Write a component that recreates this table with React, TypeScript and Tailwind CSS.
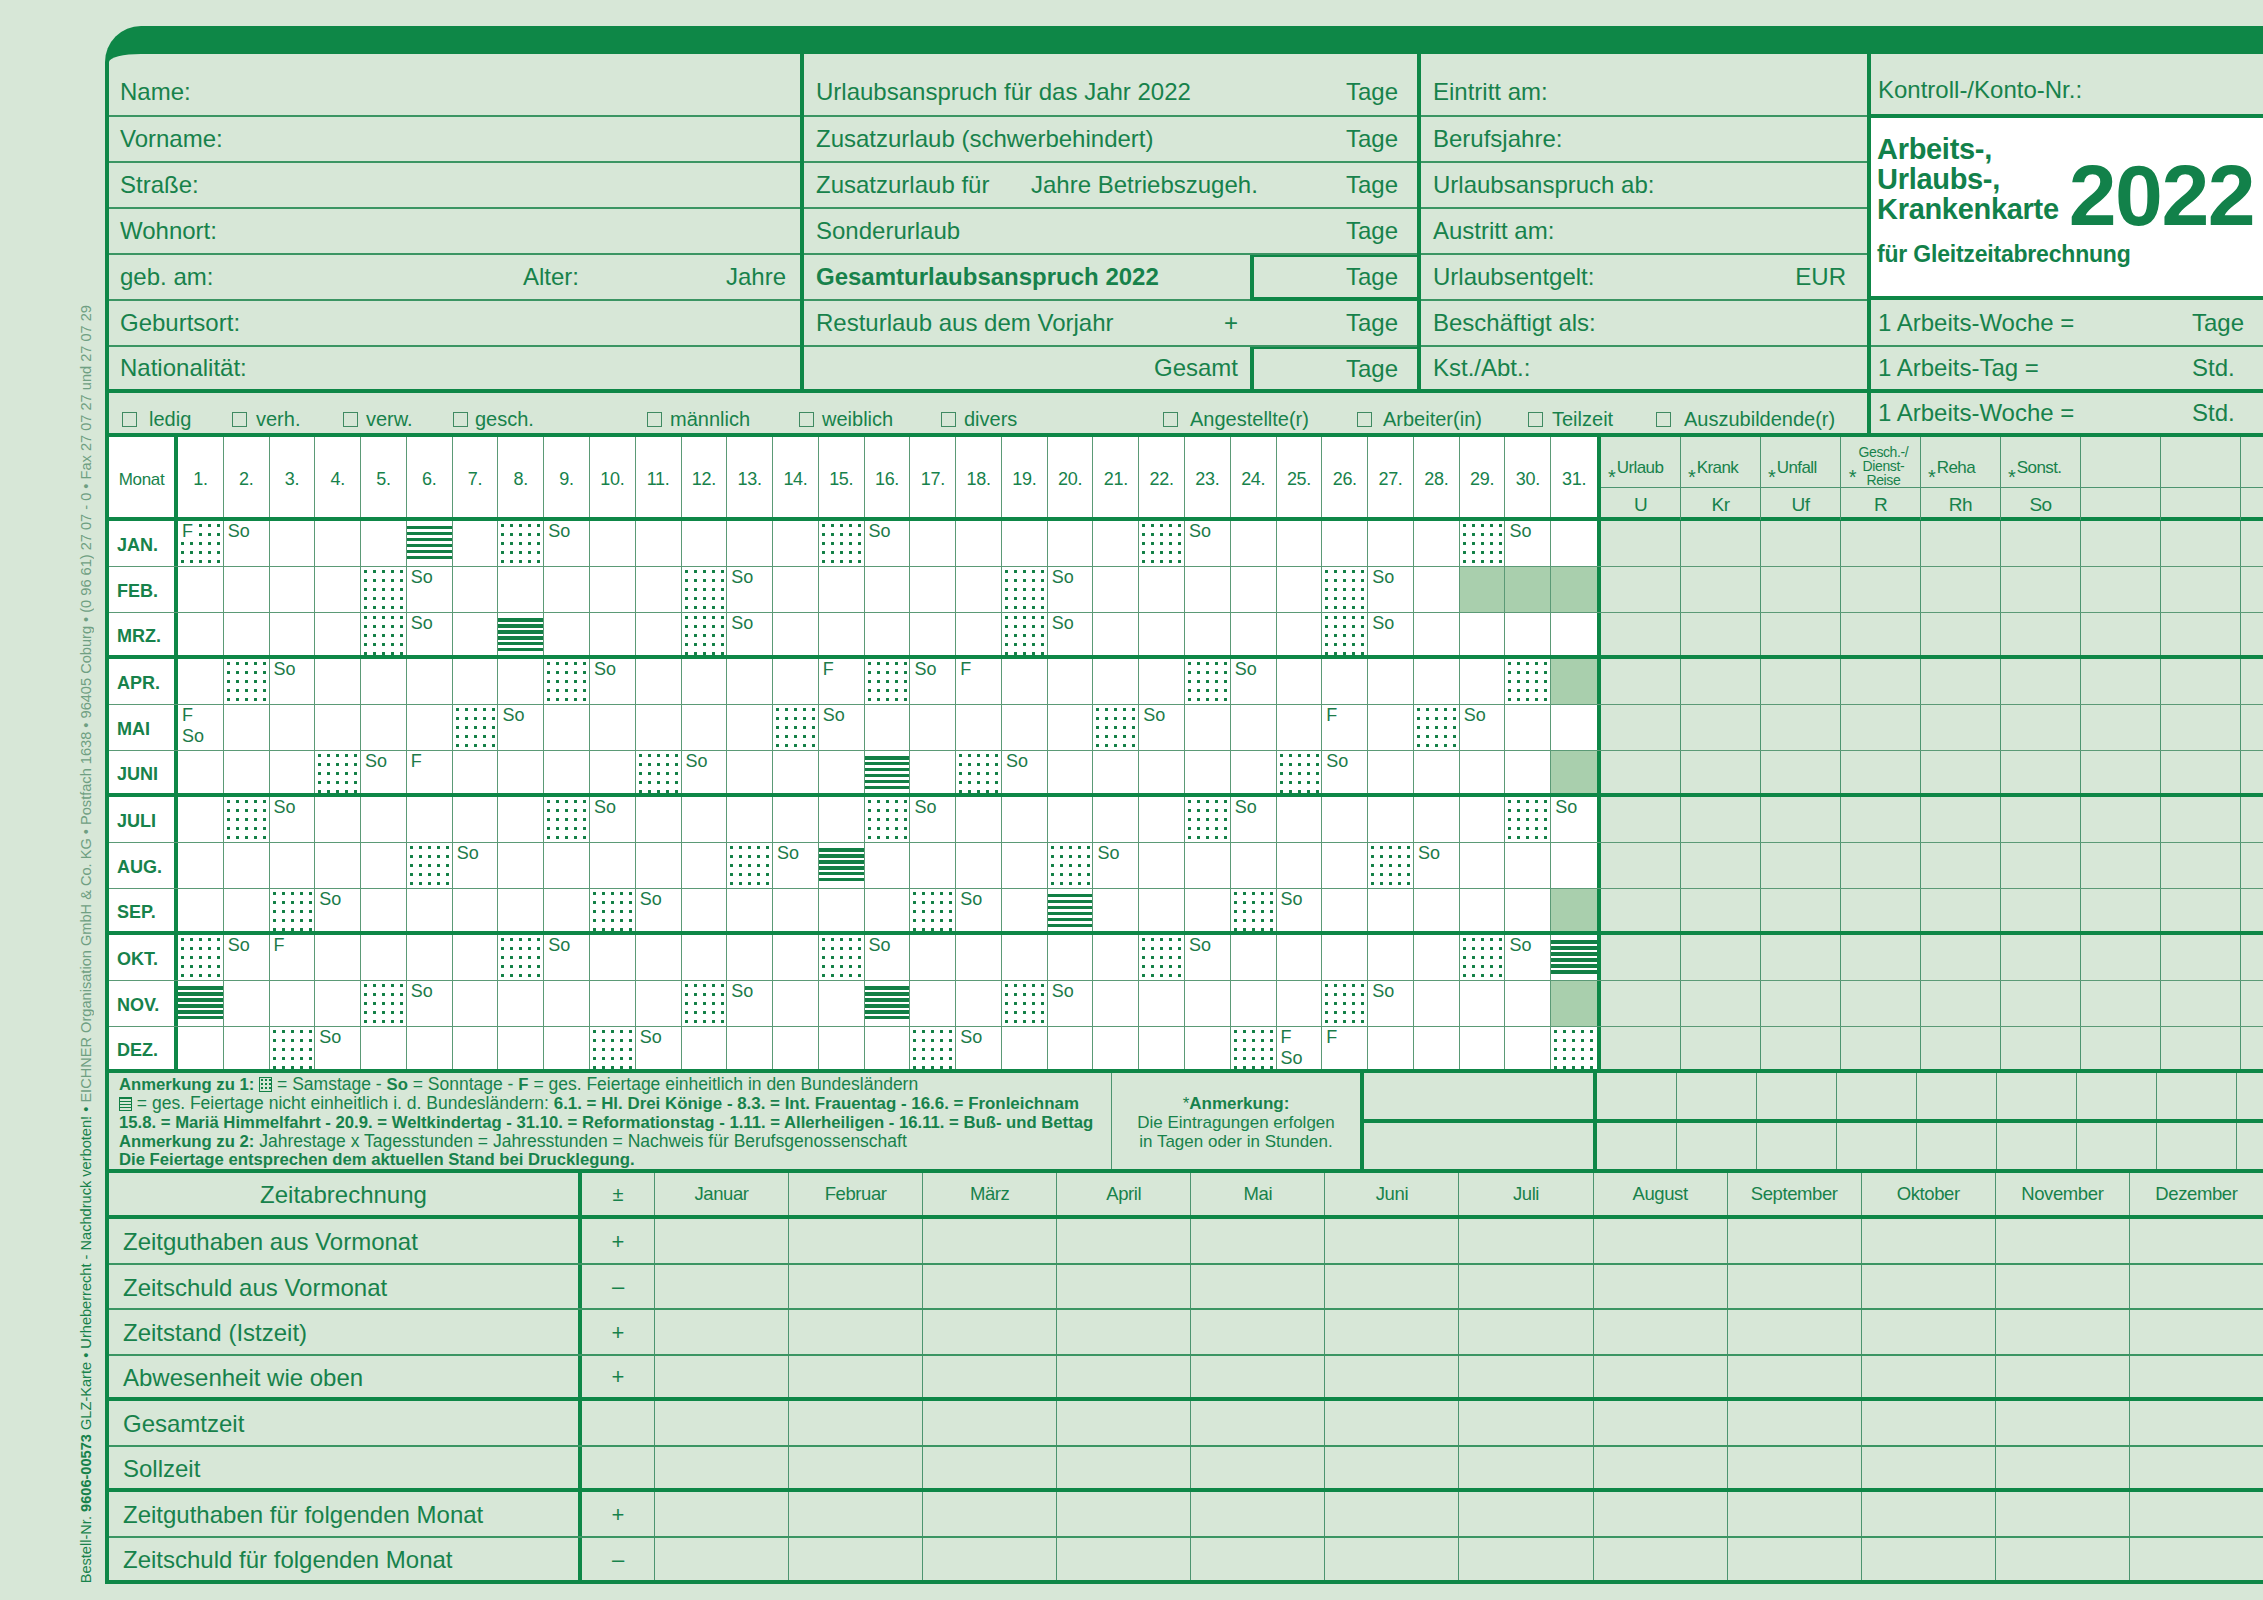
import React from "react";

const MONTHS = ["JAN.", "FEB.", "MRZ.", "APR.", "MAI", "JUNI", "JULI", "AUG.", "SEP.", "OKT.", "NOV.", "DEZ."];
const DAYS_IN = [31, 28, 31, 30, 31, 30, 31, 31, 30, 31, 30, 31];
const DAYS = Array.from({ length: 31 }, (_, i) => i + 1);

// gesetzliche Feiertage 2022, "monat-tag"
const F_DAYS = ["1-1", "4-15", "4-18", "5-1", "5-26", "6-6", "10-3", "12-25", "12-26"];
const STRIPE_DAYS = ["1-6", "3-8", "6-16", "8-15", "9-20", "10-31", "11-1", "11-16"];

const CODES = [
  { label: "Urlaub", code: "U" },
  { label: "Krank", code: "Kr" },
  { label: "Unfall", code: "Uf" },
  { label: "", code: "R" },
  { label: "Reha", code: "Rh" },
  { label: "Sonst.", code: "So" },
];

const MONATE = ["Januar", "Februar", "März", "April", "Mai", "Juni", "Juli", "August", "September", "Oktober", "November", "Dezember"];

const ZEIT = [
  { label: "Zeitguthaben aus Vormonat", sign: "+", row: "h-[46px] border-b-2 border-[#3b9563]" },
  { label: "Zeitschuld aus Vormonat", sign: "–", row: "h-[45px] border-b-2 border-[#3b9563]" },
  { label: "Zeitstand (Istzeit)", sign: "+", row: "h-[46px] border-b-2 border-[#3b9563]" },
  { label: "Abwesenheit wie oben", sign: "+", row: "h-[45px] border-b-4 border-[#0e8747]" },
  { label: "Gesamtzeit", sign: "", row: "h-[46px] border-b-2 border-[#3b9563]" },
  { label: "Sollzeit", sign: "", row: "h-[45px] border-b-4 border-[#0e8747]" },
  { label: "Zeitguthaben für folgenden Monat", sign: "+", row: "h-[46px] border-b-2 border-[#3b9563]" },
  { label: "Zeitschuld für folgenden Monat", sign: "–", row: "h-[42px]" },
];

const CHECKS = [
  { label: "ledig", w: "w-[110px]", g: "ml-[12px]" },
  { label: "verh.", w: "w-[111px]", g: "ml-[9px]" },
  { label: "verw.", w: "w-[110px]", g: "ml-[8px]" },
  { label: "gesch.", w: "w-[194px]", g: "ml-[7px]" },
  { label: "männlich", w: "w-[152px]", g: "ml-[8px]" },
  { label: "weiblich", w: "w-[142px]", g: "ml-[8px]" },
  { label: "divers", w: "w-[222px]", g: "ml-[8px]" },
  { label: "Angestellte(r)", w: "w-[194px]", g: "ml-[12px]" },
  { label: "Arbeiter(in)", w: "w-[171px]", g: "ml-[11px]" },
  { label: "Teilzeit", w: "w-[128px]", g: "ml-[9px]" },
  { label: "Auszubildende(r)", w: "w-[190px]", g: "ml-[13px]" },
];

const ROW = "h-[46px] border-b-2 border-[#3b9563] flex items-center";

function DayCell({ m, d }: { m: number; d: number }) {
  const edge = d < 31 ? "border-r border-[#5b9a76]" : "";
  if (d > DAYS_IN[m]) return <div className={`${edge} bg-[#a9cfad]`} />;
  const dow = new Date(2022, m, d).getDay();
  const key = `${m + 1}-${d}`;
  const labels: string[] = [];
  if (F_DAYS.includes(key)) labels.push("F");
  if (dow === 0) labels.push("So");
  const sat = dow === 6;
  const fill = sat
    ? "bg-white bg-[radial-gradient(circle,#127f45_1.4px,transparent_1.9px)] bg-size-[9px_9px]"
    : "bg-white";
  return (
    <div className={`${edge} ${fill} flex flex-col items-start text-[18px] leading-[21px] text-[#1c7b49]`}>
      {STRIPE_DAYS.includes(key) ? (
        <div className="mt-[5px] h-[34px] w-full bg-[repeating-linear-gradient(to_bottom,#127f45_0px,#127f45_3.5px,transparent_3.5px,transparent_6px)]" />
      ) : null}
      {labels.map((l) => (
        <span key={l} className={sat ? "bg-white pl-[4px] pr-[4px]" : "pl-[4px]"}>
          {l}
        </span>
      ))}
    </div>
  );
}

function RightCells() {
  return (
    <>
      {Array.from({ length: 8 }, (_, i) => (
        <div key={i} className="w-[80px] border-r border-[#4d9470]" />
      ))}
      <div className="flex-1" />
    </>
  );
}

function TopSection() {
  return (
    <div className="flex border-b-4 border-[#0e8747] text-[24px]">
      <div className="w-[1758px] flex flex-col">
        <div className="flex">
          {/* Persönliche Daten */}
          <div className="w-[695px] border-r-4 border-[#0e8747] flex flex-col">
            <div className="h-[63px] border-b-2 border-[#3b9563] flex items-center pt-[14px] pl-[11px]">Name:</div>
            <div className={`${ROW} pl-[11px]`}>Vorname:</div>
            <div className={`${ROW} pl-[11px]`}>Straße:</div>
            <div className={`${ROW} pl-[11px]`}>Wohnort:</div>
            <div className={`${ROW} pl-[11px] pr-[14px]`}>
              <span className="w-[403px]">geb. am:</span>
              <span>Alter:</span>
              <span className="ml-auto">Jahre</span>
            </div>
            <div className={`${ROW} pl-[11px]`}>Geburtsort:</div>
            <div className="h-[46px] border-b-4 border-[#0e8747] flex items-center pl-[11px]">Nationalität:</div>
          </div>

          {/* Urlaub */}
          <div className="w-[617px] border-r-4 border-[#0e8747] flex flex-col">
            <div className="h-[63px] border-b-2 border-[#3b9563] flex items-center pt-[14px] pl-[12px] pr-[19px]">
              <span>Urlaubsanspruch für das Jahr 2022</span>
              <span className="ml-auto">Tage</span>
            </div>
            <div className={`${ROW} pl-[12px] pr-[19px]`}>
              <span>Zusatzurlaub (schwerbehindert)</span>
              <span className="ml-auto">Tage</span>
            </div>
            <div className={`${ROW} pl-[12px] pr-[19px]`}>
              <span className="w-[215px]">Zusatzurlaub für</span>
              <span>Jahre Betriebszugeh.</span>
              <span className="ml-auto">Tage</span>
            </div>
            <div className={`${ROW} pl-[12px] pr-[19px]`}>
              <span>Sonderurlaub</span>
              <span className="ml-auto">Tage</span>
            </div>
            <div className="h-[46px] flex">
              <div className="flex-1 border-b-2 border-[#3b9563] flex items-center pl-[12px] font-bold">Gesamturlaubsanspruch 2022</div>
              <div className="w-[167px] border-l-4 border-t-2 border-b-4 border-[#0e8747] flex items-center justify-end pr-[19px]">Tage</div>
            </div>
            <div className={`${ROW} pl-[12px] pr-[19px]`}>
              <span className="w-[408px]">Resturlaub aus dem Vorjahr</span>
              <span>+</span>
              <span className="ml-auto">Tage</span>
            </div>
            <div className="h-[46px] border-b-4 border-[#0e8747] flex">
              <div className="flex-1 flex items-center justify-end pr-[12px]">Gesamt</div>
              <div className="w-[167px] border-l-4 border-t-2 border-[#0e8747] flex items-center justify-end pr-[19px]">Tage</div>
            </div>
          </div>

          {/* Beschäftigung */}
          <div className="flex-1 flex flex-col">
            <div className="h-[63px] border-b-2 border-[#3b9563] flex items-center pt-[14px] pl-[12px]">Eintritt am:</div>
            <div className={`${ROW} pl-[12px]`}>Berufsjahre:</div>
            <div className={`${ROW} pl-[12px]`}>Urlaubsanspruch ab:</div>
            <div className={`${ROW} pl-[12px]`}>Austritt am:</div>
            <div className={`${ROW} pl-[12px] pr-[21px]`}>
              <span>Urlaubsentgelt:</span>
              <span className="ml-auto">EUR</span>
            </div>
            <div className={`${ROW} pl-[12px]`}>Beschäftigt als:</div>
            <div className="h-[46px] border-b-4 border-[#0e8747] flex items-center pl-[12px]">Kst./Abt.:</div>
          </div>
        </div>

        {/* Familienstand / Beschäftigungsart */}
        <div className="h-[40px] flex items-center pt-[12px] pl-[13px] text-[20px]">
          {CHECKS.map((c) => (
            <div key={c.label} className={`${c.w} flex items-center`}>
              <span className="w-[15px] h-[15px] border border-[#3f8a62] shrink-0" />
              <span className={c.g}>{c.label}</span>
            </div>
          ))}
        </div>
      </div>

      {/* Titel */}
      <div className="flex-1 border-l-4 border-[#0e8747] flex flex-col">
        <div className="h-[64px] border-b-4 border-[#0e8747] flex items-center pt-[12px] pl-[7px]">Kontroll-/Konto-Nr.:</div>
        <div className="h-[182px] border-b-4 border-[#0e8747] bg-white pl-[6px] pt-[16px] text-[#12814a]">
          <div className="flex items-end">
            <div className="font-bold text-[29px] leading-[30px] tracking-[-0.3px]">
              Arbeits-,
              <br />
              Urlaubs-,
              <br />
              Krankenkarte
            </div>
            <div className="ml-[10px] font-bold text-[86px] leading-[58px] tracking-[-1.5px]">2022</div>
          </div>
          <div className="mt-[16px] font-bold text-[23px] leading-[28px] tracking-[-0.2px]">für Gleitzeitabrechnung</div>
        </div>
        <div className="h-[47px] border-b-2 border-[#3b9563] flex items-center pl-[7px]">
          <span className="w-[314px]">1 Arbeits-Woche =</span>
          <span>Tage</span>
        </div>
        <div className="h-[46px] border-b-4 border-[#0e8747] flex items-center pl-[7px]">
          <span className="w-[314px]">1 Arbeits-Tag =</span>
          <span>Std.</span>
        </div>
        <div className="h-[40px] flex items-center pl-[7px]">
          <span className="w-[314px]">1 Arbeits-Woche =</span>
          <span>Std.</span>
        </div>
      </div>
    </div>
  );
}

function CodeHead({ label }: { label: string }) {
  if (!label) {
    return (
      <div className="w-[80px] border-r border-[#4d9470] flex justify-center pt-[8px] pr-[4px]">
        <span className="text-[20px] leading-[20px] mt-[22px] mr-[2px]">*</span>
        <div className="text-center text-[14px] leading-[14px] tracking-[-0.4px]">
          Gesch.-/
          <br />
          Dienst-
          <br />
          Reise
        </div>
      </div>
    );
  }
  return (
    <div className="w-[80px] border-r border-[#4d9470] flex pt-[22px] pl-[7px]">
      <span className="text-[20px] leading-[20px] mt-[8px] mr-[1px]">*</span>
      <span className="text-[17px] leading-[18px] tracking-[-0.6px]">{label}</span>
    </div>
  );
}

function Calendar() {
  return (
    <div className="flex flex-col">
      <div className="flex h-[84px] border-b-4 border-[#0e8747]">
        <div className="w-[69px] border-r-4 border-[#0e8747] bg-white flex items-center justify-center pt-[5px] text-[17px] tracking-[-0.3px]">
          Monat
        </div>
        <div className="w-[1419px] grid grid-cols-[repeat(31,minmax(0,1fr))] bg-white">
          {DAYS.map((d) => (
            <div
              key={d}
              className={`${d < 31 ? "border-r border-[#5b9a76]" : ""} flex items-center justify-center pt-[5px] text-[18px] tracking-[-0.3px]`}
            >
              {d}.
            </div>
          ))}
        </div>
        <div className="flex-1 border-l-4 border-[#0e8747] flex flex-col">
          <div className="h-[55px] flex border-b border-[#4d9470]">
            {CODES.map((c) => (
              <CodeHead key={c.code} label={c.label} />
            ))}
            <div className="w-[80px] border-r border-[#4d9470]" />
            <div className="w-[80px] border-r border-[#4d9470]" />
            <div className="flex-1" />
          </div>
          <div className="flex-1 flex">
            {CODES.map((c) => (
              <div
                key={c.code}
                className="w-[80px] border-r border-[#4d9470] flex items-center justify-center pt-[3px] text-[19px] tracking-[-0.5px]"
              >
                {c.code}
              </div>
            ))}
            <div className="w-[80px] border-r border-[#4d9470]" />
            <div className="w-[80px] border-r border-[#4d9470]" />
            <div className="flex-1" />
          </div>
        </div>
      </div>

      {MONTHS.map((name, m) => (
        <div
          key={name}
          className={`flex h-[46px] ${m % 3 === 2 ? "border-b-4 border-[#0e8747]" : "border-b border-[#5b9a76]"}`}
        >
          <div className="w-[69px] border-r-4 border-[#0e8747] bg-white flex items-center pl-[8px] pt-[4px] text-[18px] font-bold">
            {name}
          </div>
          <div className="w-[1419px] grid grid-cols-[repeat(31,minmax(0,1fr))]">
            {DAYS.map((d) => (
              <DayCell key={d} m={m} d={d} />
            ))}
          </div>
          <div className="flex-1 border-l-4 border-[#0e8747] flex">
            <RightCells />
          </div>
        </div>
      ))}
    </div>
  );
}

function SatIcon() {
  return (
    <span className="inline-block w-[13px] h-[15px] align-[-2px] border border-[#127f45] bg-[radial-gradient(circle,#127f45_0.8px,transparent_1.2px)] bg-size-[4px_4px]" />
  );
}

function StripeIcon() {
  return (
    <span className="inline-block w-[13px] h-[14px] align-[-2px] border border-[#127f45] bg-[repeating-linear-gradient(to_bottom,#127f45_0px,#127f45_1px,transparent_1px,transparent_3px)]" />
  );
}

function Notes() {
  return (
    <div className="flex h-[100px] border-b-4 border-[#0e8747]">
      <div className="w-[1003px] border-r border-[#4d9470] pl-[10px] pt-[2px] text-[17.5px] leading-[18.3px] whitespace-nowrap">
        <div>
          <b className="text-[16.7px]">Anmerkung zu 1:</b> <SatIcon /> = Samstage - <b className="text-[16.7px]">So</b> = Sonntage -{" "}
          <b className="text-[16.7px]">F</b> = ges. Feiertage einheitlich in den Bundesländern
        </div>
        <div>
          <StripeIcon /> = ges. Feiertage nicht einheitlich i. d. Bundesländern:{" "}
          <b className="text-[16.9px]">6.1. = Hl. Drei Könige - 8.3. = Int. Frauentag - 16.6. = Fronleichnam</b>
        </div>
        <div className="font-bold text-[16.7px]">
          15.8. = Mariä Himmelfahrt - 20.9. = Weltkindertag - 31.10. = Reformationstag - 1.11. = Allerheiligen - 16.11. = Buß- und
          Bettag
        </div>
        <div>
          <b className="text-[16.7px]">Anmerkung zu 2:</b> Jahrestage x Tagesstunden = Jahresstunden = Nachweis für Berufsgenossenschaft
        </div>
        <div className="font-bold text-[16.7px]">Die Feiertage entsprechen dem aktuellen Stand bei Drucklegung.</div>
      </div>
      <div className="w-[252px] border-r-4 border-[#0e8747] flex flex-col items-center justify-center pt-[2px] text-[17px] leading-[19px]">
        <div>
          *<b>Anmerkung:</b>
        </div>
        <div>Die Eintragungen erfolgen</div>
        <div>in Tagen oder in Stunden.</div>
      </div>
      <div className="flex-1 flex flex-col">
        <div className="h-[50px] border-b-4 border-[#0e8747] flex">
          <div className="w-[233px] border-r-4 border-[#0e8747]" />
          <RightCells />
        </div>
        <div className="flex-1 flex">
          <div className="w-[233px] border-r-4 border-[#0e8747]" />
          <RightCells />
        </div>
      </div>
    </div>
  );
}

function Zeitabrechnung() {
  return (
    <div className="flex flex-col">
      <div className="flex h-[46px] border-b-4 border-[#0e8747]">
        <div className="w-[473px] border-r-4 border-[#0e8747] flex items-center justify-center pt-[2px] text-[24px]">Zeitabrechnung</div>
        <div className="w-[73px] border-r border-[#4d9470] flex items-center justify-center text-[20px]">±</div>
        {MONATE.map((mo, i) => (
          <div
            key={mo}
            className={`flex-1 ${i < 11 ? "border-r border-[#4d9470]" : ""} flex items-center justify-center text-[18.5px] tracking-[-0.4px]`}
          >
            {mo}
          </div>
        ))}
      </div>
      {ZEIT.map((z) => (
        <div key={z.label} className={`flex ${z.row}`}>
          <div className="w-[473px] border-r-4 border-[#0e8747] flex items-center pl-[14px] pt-[2px] text-[24px]">{z.label}</div>
          <div className="w-[73px] border-r border-[#4d9470] flex items-center justify-center text-[22px]">{z.sign}</div>
          {MONATE.map((mo, k) => (
            <div key={mo} className={`flex-1 ${k < 11 ? "border-r border-[#4d9470]" : ""}`} />
          ))}
        </div>
      ))}
    </div>
  );
}

function SideText() {
  return (
    <div className="w-[105px] flex items-end justify-end pb-[17px] pr-[10px]">
      <div className="[writing-mode:vertical-rl] rotate-180 whitespace-nowrap text-[14.6px] leading-[17px]">
        <span>Bestell-Nr. </span>
        <b>9606-00573</b>
        <span> GLZ-Karte • Urheberrecht - Nachdruck verboten! • </span>
        <span className="text-[#6f9f82]">
          EICHNER Organisation GmbH &amp; Co. KG • Postfach 1638 • 96405 Coburg • (0 96 61) 27 07 - 0 • Fax 27 07 27 und 27 07 29
        </span>
      </div>
    </div>
  );
}

export default function App() {
  return (
    <div className="w-[2263px] h-[1600px] overflow-hidden bg-[#d7e7d7] flex font-['Liberation_Sans',Arial,sans-serif] text-[#17824b]">
      <SideText />
      <div className="w-[2158px] self-start mt-[26px] border-l-4 border-t-[28px] border-b-4 border-[#0e8747] rounded-tl-[36px] flex flex-col">
        <TopSection />
        <Calendar />
        <Notes />
        <Zeitabrechnung />
      </div>
    </div>
  );
}
